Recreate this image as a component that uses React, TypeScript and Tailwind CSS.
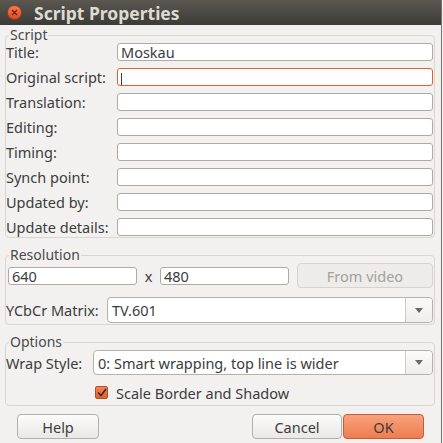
import { ReactNode } from 'react';

const font = { fontFamily: '"Noto Sans", "DejaVu Sans", sans-serif' };

function TextInput({ value, focused }: { value?: string; focused?: boolean }) {
  return (
    <div
      className={
        'h-[18px] overflow-hidden rounded-[3px] border bg-white px-[3px] text-[14.5px] leading-[16px] text-[#3c3c3c] ' +
        (focused ? 'border-[#e0622f]' : 'border-[#aeaba6]')
      }
    >
      {focused ? <span className="inline-block h-[12px] w-px translate-y-[2px] bg-[#3c3c3c]" /> : value}
    </div>
  );
}

function Select({ value, height }: { value: string; height: string }) {
  return (
    <div className={'flex items-stretch rounded-[4px] border border-[#b5b2ad] bg-white ' + height}>
      <div className="flex flex-1 items-center px-[4px] text-[14.5px] leading-[18px] text-[#3c3c3c]">{value}</div>
      <div className="flex w-[27px] items-center justify-center rounded-r-[4px] border-l border-[#cfccc8] bg-gradient-to-b from-[#fafaf9] to-[#efeeec]">
        <svg width="8" height="5" viewBox="0 0 8 5">
          <path d="M0 0h8L4 5z" fill="#6c6a66" />
        </svg>
      </div>
    </div>
  );
}

function Group({ title, children, className }: { title: string; children: ReactNode; className?: string }) {
  return (
    <fieldset className={'rounded-[4px] border border-[#d9d6d1] ' + (className ?? '')}>
      <legend className="ml-[3px] px-px text-[14px] leading-[16px] text-[#4a4a4a]">{title}</legend>
      {children}
    </fieldset>
  );
}

function Button({ children, className }: { children: ReactNode; className: string }) {
  return (
    <div className={'flex h-[25px] items-center justify-center rounded-[4px] border text-[14.5px] leading-[18px] ' + className}>
      {children}
    </div>
  );
}

const fields = [
  ['Title:', 'Moskau'],
  ['Original script:', ''],
  ['Translation:', ''],
  ['Editing:', ''],
  ['Timing:', ''],
  ['Synch point:', ''],
  ['Updated by:', ''],
  ['Update details:', ''],
];

export default function App() {
  return (
    <div className="h-[443px] w-[443px] overflow-hidden bg-[#f2f1f0]" style={font}>
      <div className="h-[443px] w-[442px] border-r border-[#77746f]">
        <div className="flex h-[25px] items-center bg-gradient-to-b from-[#5b5851] to-[#3c3b37]">
          <div className="ml-[7px] flex h-[15px] w-[15px] items-center justify-center rounded-full border border-[#9e3a19] bg-gradient-to-b from-[#f47c51] to-[#de4b1e]">
            <svg width="7" height="7" viewBox="0 0 7 7">
              <path d="M1 1l5 5M6 1L1 6" stroke="#6b2410" strokeWidth="1.3" />
            </svg>
          </div>
          <span className="ml-[12px] text-[17.5px] leading-[20px] font-bold text-[#dfdbd2]">Script Properties</span>
        </div>

        <div className="flex flex-col px-[5px] pt-[2px]">
          <Group title="Script" className="w-[430px] pb-px">
            <div className="grid grid-cols-[111px_1fr] gap-y-[7px] pr-px">
              {fields.map(([label, value], i) => (
                <div key={label} className="contents">
                  <div className="flex h-[18px] items-center text-[14.5px] leading-[18px] text-[#3c3c3c]">{label}</div>
                  <TextInput value={value} focused={i === 1} />
                </div>
              ))}
            </div>
          </Group>

          <Group title="Resolution" className="mt-[9px] w-[430px] pb-px">
            <div className="flex h-[25px] items-center pl-[2px] pr-px">
              <div className="w-[129px]">
                <TextInput value="640" />
              </div>
              <span className="w-[23px] text-center text-[14.5px] leading-[18px] text-[#3c3c3c]">x</span>
              <div className="w-[129px]">
                <TextInput value="480" />
              </div>
              <Button className="ml-auto w-[136px] border-[#d6d3cf] bg-[#edecea] text-[#a59f9a]">From video</Button>
            </div>
            <div className="mt-[9px] flex items-center pr-px">
              <span className="w-[101px] text-[14.5px] leading-[18px] text-[#3c3c3c]">YCbCr Matrix:</span>
              <div className="flex-1">
                <Select value="TV.601" height="h-[26px]" />
              </div>
            </div>
          </Group>

          <Group title="Options" className="mt-[9px] w-[430px] pb-[6px]">
            <div className="flex items-center pr-px">
              <span className="w-[87px] text-[14.5px] leading-[18px] text-[#3c3c3c]">Wrap Style:</span>
              <div className="flex-1">
                <Select value="0: Smart wrapping, top line is wider" height="h-[25px]" />
              </div>
            </div>
            <div className="ml-[89px] mt-[11px] flex h-[13px] items-center gap-[8px]">
              <div className="flex h-[13px] w-[13px] shrink-0 items-center justify-center rounded-[2px] border border-[#b24f2b] bg-gradient-to-b from-[#f08358] to-[#e2602f]">
                <svg width="10" height="9" viewBox="0 0 10 9">
                  <path d="M1 4.5l3 3L9 1" stroke="#3a2a24" strokeWidth="1.6" fill="none" />
                </svg>
              </div>
              <span className="text-[14.5px] leading-[18px] text-[#3c3c3c]">Scale Border and Shadow</span>
            </div>
          </Group>

          <div className="mt-[8px] flex">
            <Button className="ml-[12px] w-[82px] border-[#b3b0ab] bg-gradient-to-b from-[#fbfbfa] to-[#e9e8e6] text-[#3c3c3c]">Help</Button>
            <Button className="ml-auto w-[90px] border-[#b3b0ab] bg-gradient-to-b from-[#fbfbfa] to-[#e9e8e6] text-[#3c3c3c]">Cancel</Button>
            <Button className="ml-[1px] mr-[12px] w-[81px] border-[#c55c36] bg-gradient-to-b from-[#f7a27c] to-[#ee7c50] text-[#3c3c3c]">OK</Button>
          </div>
        </div>
      </div>
    </div>
  );
}
